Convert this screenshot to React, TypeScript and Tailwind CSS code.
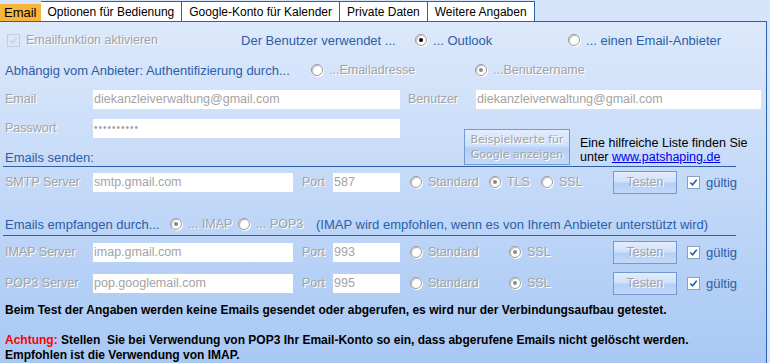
import React from "react"

const emboss = "text-[#a3a3a3] [text-shadow:1px_1px_0_#ffffff]"
const blue = "text-[13px] text-[#2b5ea7]"

function Radio({ checked = false, dark = false }: { checked?: boolean; dark?: boolean }) {
  return (
    <span className="relative inline-flex h-[12px] w-[12px] shrink-0 items-center justify-center rounded-full border border-[#9a9a9a] bg-white shadow-[inset_1px_1px_1px_rgba(0,0,0,0.25),1px_1px_0_#ffffff]">
      {checked && (
        <span className={"h-[4px] w-[4px] rounded-full " + (dark ? "bg-black" : "bg-[#8a8a8a]")} />
      )}
    </span>
  )
}

function RadioLabel({
  checked,
  dark,
  label,
  className = "",
  textClass = emboss,
}: {
  checked?: boolean
  dark?: boolean
  label: string
  className?: string
  textClass?: string
}) {
  return (
    <span className={"flex items-center gap-[6px] " + className}>
      <Radio checked={checked} dark={dark} />
      <span className={textClass}>{label}</span>
    </span>
  )
}

function Check({ disabled = false }: { disabled?: boolean }) {
  return (
    <span
      className={
        "inline-flex h-[13px] w-[13px] shrink-0 items-center justify-center border " +
        (disabled ? "border-[#c4cfdc] bg-transparent" : "border-[#8aa0bd] bg-white")
      }
    >
      <svg viewBox="0 0 12 12" className="h-[11px] w-[11px]">
        <path
          d="M2.5 6 L5 8.5 L9.5 3"
          fill="none"
          stroke={disabled ? "#c9d3df" : "#2b5ea7"}
          strokeWidth="1.8"
        />
      </svg>
    </span>
  )
}

function Field({ value, w }: { value: string; w: string }) {
  return (
    <div className={"flex h-[19px] shrink-0 items-center bg-white px-[1px] text-[12.5px] text-[#a3a3a3] " + w}>
      {value}
    </div>
  )
}

function Testen() {
  return (
    <div className="flex h-[23px] w-[64px] shrink-0 items-center justify-center border border-[#7399d3] bg-[linear-gradient(#e3edfc,#d0e1fa_45%,#b5cff5_55%,#c3d9f8)] text-[#a3a3a3] [text-shadow:1px_1px_0_#ffffff]">
      Testen
    </div>
  )
}

function ServerRow({
  label,
  server,
  port,
  tls,
}: {
  label: string
  server: string
  port: string
  tls?: boolean
}) {
  return (
    <div className="flex h-[24px] items-center pl-[5px] text-[12.5px]">
      <span className={"w-[88px] " + emboss}>{label}</span>
      <Field value={server} w="w-[200px]" />
      <span className={"ml-[9px] w-[31px] " + emboss}>Port</span>
      <Field value={port} w="w-[67px]" />
      {tls ? (
        <>
          <RadioLabel label="Standard" className="ml-[10px] w-[79px]" />
          <RadioLabel checked label="TLS" className="w-[52px]" />
          <RadioLabel label="SSL" className="w-[72px]" />
        </>
      ) : (
        <>
          <RadioLabel label="Standard" className="ml-[10px] w-[99px]" />
          <RadioLabel checked label="SSL" className="w-[104px]" />
        </>
      )}
      <Testen />
      <span className="ml-[10px] flex items-center gap-[6px]">
        <Check />
        <span className={blue}>gültig</span>
      </span>
    </div>
  )
}

export default function App() {
  const tabs = ["Optionen für Bedienung", "Google-Konto für Kalender", "Private Daten", "Weitere Angaben"]
  return (
    <div className="h-[363px] w-[770px] overflow-hidden bg-[#d5e4fa] font-['Liberation_Sans',Arial,sans-serif] text-[12px] leading-none">
      <div className="flex h-[21px] items-end pt-[1px]">
        <div className="flex h-[17px] items-center bg-[#f8b53b] px-[4px] text-[13px] text-black">Email</div>
        {tabs.map((t) => (
          <div
            key={t}
            className="flex h-[20px] items-center border-t border-r border-[#2e62a8] bg-white px-[7px] text-[12px] text-black first:border-l"
          >
            {t}
          </div>
        ))}
      </div>

      <div className="h-[342px] w-[767px] border-t border-r border-[#2e62a8] bg-[linear-gradient(#dde9fb,#a8c8f4)]">
        <div className="mt-[8px] flex h-[20px] items-center">
          <span className="ml-[7px] flex items-center gap-[6px]">
            <Check disabled />
            <span className={"text-[12.5px] " + emboss}>Emailfunktion aktivieren</span>
          </span>
          <span className={"ml-[83px] w-[174px] " + blue}>Der Benutzer verwendet ...</span>
          <RadioLabel checked dark label="... Outlook" className="w-[153px]" textClass={blue} />
          <RadioLabel label="... einen Email-Anbieter" textClass={blue} />
        </div>

        <div className="mt-[10px] flex h-[20px] items-center pl-[5px] text-[12.5px]">
          <span className={"w-[306px] " + blue}>Abhängig vom Anbieter: Authentifizierung durch...</span>
          <RadioLabel label="...Emailadresse" className="w-[164px]" />
          <RadioLabel checked label="...Benutzername" />
        </div>

        <div className="mt-[9px] flex h-[20px] items-center pl-[5px] text-[12.5px]">
          <span className={"w-[88px] " + emboss}>Email</span>
          <Field value="diekanzleiverwaltung@gmail.com" w="w-[307px]" />
          <span className={"ml-[8px] w-[68px] " + emboss}>Benutzer</span>
          <Field value="diekanzleiverwaltung@gmail.com" w="w-[285px]" />
        </div>

        <div className="mx-[3px] mt-[9px] flex h-[49px] w-[733px] border-b border-[#2e62a8]">
          <div className="flex w-[461px] shrink-0 flex-col pl-[2px] text-[12.5px]">
            <div className="flex h-[20px] items-center">
              <span className={"w-[88px] " + emboss}>Passwort</span>
              <Field value="••••••••••" w="w-[307px] !text-[10px] tracking-[1px]" />
            </div>
            <span className={"mt-[13px] " + blue}>Emails senden:</span>
          </div>
          <div className="mt-[11px] flex h-[36px] w-[106px] shrink-0 flex-col items-center justify-center border border-[#7399d3] bg-[linear-gradient(#e3edfc,#d0e1fa_45%,#b5cff5_55%,#c3d9f8)] font-['DejaVu_Sans',sans-serif] text-[11px] leading-[15px] text-[#a3a3a3] [text-shadow:1px_1px_0_#ffffff]">
            <span>Beispielwerte für</span>
            <span>Google anzeigen</span>
          </div>
          <div className="ml-[10px] mt-[18px] flex flex-col whitespace-nowrap text-[12.5px] leading-[14px] text-black">
            <span>Eine hilfreiche Liste finden Sie</span>
            <span>
              unter <span className="text-[#0000ee] underline">www.patshaping.de</span>
            </span>
          </div>
        </div>

        <div className="mt-[3px]">
          <ServerRow label="SMTP Server" server="smtp.gmail.com" port="587" tls />
        </div>

        <div className="mx-[3px] mt-[21px] flex h-[21px] w-[733px] items-center border-b border-[#2e62a8] pb-[2px] pl-[2px] text-[12.5px]">
          <span className={"w-[165px] " + blue}>Emails empfangen durch...</span>
          <RadioLabel checked label="... IMAP" className="w-[68px]" />
          <RadioLabel label="... POP3" className="w-[78px]" />
          <span className={blue}>(IMAP wird empfohlen, wenn es von Ihrem Anbieter unterstützt wird)</span>
        </div>

        <div className="mt-[4px]">
          <ServerRow label="IMAP Server" server="imap.gmail.com" port="993" />
        </div>
        <div className="mt-[7px]">
          <ServerRow label="POP3 Server" server="pop.googlemail.com" port="995" />
        </div>

        <div className="mt-[8px] pl-[5px] text-[12px] font-bold leading-[15px] text-black">
          <p>Beim Test der Angaben werden keine Emails gesendet oder abgerufen, es wird nur der Verbindungsaufbau getestet.</p>
          <p className="mt-[15px]">
            <span className="text-[#ff0000]">Achtung:</span> Stellen&nbsp; Sie bei Verwendung von POP3 Ihr Email-Konto so ein, dass abgerufene Emails nicht gelöscht werden.
          </p>
          <p>Empfohlen ist die Verwendung von IMAP.</p>
        </div>
      </div>
    </div>
  )
}
